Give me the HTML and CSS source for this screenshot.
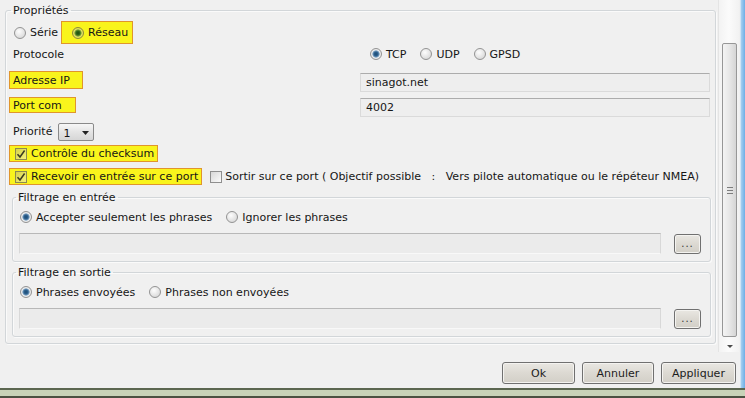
FILE: index.html
```html
<!DOCTYPE html>
<html>
<head>
  <meta charset="UTF-8"/>
  <title>Propriétés</title>
  <link rel="stylesheet" href="styles.css">
</head>
<body>
<div class="window">
  <div class="client">
    <div class="scrollarea">
      <div class="content">
        <fieldset class="group group-main">
          <legend>Propriétés</legend>

          <div class="row row-mode">
            <label class="opt"><span class="radio"></span>Série</label>
            <label class="opt mark mark-mode"><span class="radio on-mark"></span>Réseau</label>
          </div>

          <div class="row row-proto">
            <span class="col-label lbl">Protocole</span>
            <div class="col-field opts">
              <label class="opt"><span class="radio on"></span>TCP</label>
              <label class="opt"><span class="radio"></span>UDP</label>
              <label class="opt"><span class="radio"></span>GPSD</label>
            </div>
          </div>

          <div class="row row-ip">
            <div class="col-label"><span class="mark mark-ip">Adresse IP</span></div>
            <div class="col-field"><div class="field field-ip">sinagot.net</div></div>
          </div>

          <div class="row row-port">
            <div class="col-label"><span class="mark mark-port">Port com</span></div>
            <div class="col-field"><div class="field field-port">4002</div></div>
          </div>

          <div class="row row-prio">
            <span class="lbl">Priorité</span>
            <div class="combo">
              <span>1</span>
              <svg width="7" height="4" viewBox="0 0 7 4"><path d="M0 0H7L3.5 4Z" fill="#222"/></svg>
            </div>
          </div>

          <div class="row row-check">
            <label class="opt mark mark-check">
              <span class="check check-mark"><svg width="10" height="10" viewBox="0 0 10 10"><path d="M1.5 5.2L4 8L8.6 1.5" fill="none" stroke="#3a3a20" stroke-width="1.5"/></svg></span>Contrôle du checksum
            </label>
          </div>

          <div class="row row-recv">
            <label class="opt mark mark-check">
              <span class="check check-mark"><svg width="10" height="10" viewBox="0 0 10 10"><path d="M1.5 5.2L4 8L8.6 1.5" fill="none" stroke="#3a3a20" stroke-width="1.5"/></svg></span>Recevoir en entrée sur ce port
            </label>
            <label class="opt opt-out"><span class="check"></span><span class="pre">Sortir sur ce port ( Objectif possible   :   Vers pilote automatique ou le répéteur NMEA)</span></label>
          </div>

          <fieldset class="group group-sub group-in">
            <legend>Filtrage en entrée</legend>
            <div class="row row-filter">
              <label class="opt"><span class="radio on"></span>Accepter seulement les phrases</label>
              <label class="opt"><span class="radio"></span>Ignorer les phrases</label>
            </div>
            <div class="row row-list">
              <div class="field field-list"></div>
              <button class="browse">...</button>
            </div>
          </fieldset>

          <fieldset class="group group-sub group-out">
            <legend>Filtrage en sortie</legend>
            <div class="row row-filter">
              <label class="opt"><span class="radio on"></span>Phrases envoyées</label>
              <label class="opt"><span class="radio"></span>Phrases non envoyées</label>
            </div>
            <div class="row row-list">
              <div class="field field-list"></div>
              <button class="browse">...</button>
            </div>
          </fieldset>
        </fieldset>
      </div>

      <div class="vscroll">
        <div class="thumb"><span class="grip"></span></div>
        <span class="arrow-down"></span>
      </div>
    </div>

    <div class="buttonbar">
      <button class="btn btn-ok">Ok</button>
      <button class="btn btn-cancel">Annuler</button>
      <button class="btn btn-apply">Appliquer</button>
    </div>
  </div>
  <div class="frame-right"></div>
</div>
<div class="taskbar"></div>
</body>
</html>
```

FILE: styles.css
```css
html, body{
  margin: 0;
  padding: 0;
}
body{
  width: 745px;
  height: 398px;
  overflow: hidden;
  background-color: #f0f0f0;
  color: #161616;
  font-family: "DejaVu Sans", sans-serif;
  font-size: 11px;
  line-height: 13px;
  display: flex;
  flex-direction: column;
}

/* window frame */
.window{
  display: flex;
  height: 388px;
}
.client{
  width: 740px;
  display: flex;
  flex-direction: column;
}
.frame-right{
  width: 5px;
  background: linear-gradient(to right, #e9f1f8, #9fcbef 30%, #6eaee6);
}
.taskbar{
  height: 6px;
  border-top: 2px solid #5b6650;
  border-bottom: 2px solid #4b5242;
  background-color: #c8d3b8;
}

.scrollarea{
  height: 352px;
  display: flex;
}
.content{
  width: 711px;
  padding: 4px 2px 0 5px;
}

/* group boxes */
.group{
  margin: 0;
  border: 1px solid #d2d6d9;
  border-radius: 3px;
  box-shadow: inset 1px 1px 0 #fafafa, 1px 1px 0 #fafafa;
  min-width: 0;
}
.group legend{
  padding: 0 2px;
  line-height: 13px;
}
.group-main{
  padding: 0 4px 6px 3px;
}
.group-main > legend{
  margin-left: 2px;
}
.group-sub{
  padding: 0 9px 7px 6px;
  margin-left: 3px;
}
.group-sub > legend{
  margin-left: -3px;
}
.group-in{ margin-top: 6px; }
.group-out{ margin-top: 4px; }

/* rows */
.row{
  display: flex;
  align-items: center;
}
.row-mode{ margin-top: 4px; height: 23px; padding-left: 5px; }
.row-proto{ height: 20px; }
.row-ip{ margin-top: 7px; height: 21px; align-items: flex-start; }
.row-port{ margin-top: 5px; height: 20px; align-items: flex-start; }
.row-prio{ margin-top: 6px; height: 18px; align-items: flex-start; }
.row-check{ margin-top: 4px; height: 17px; }
.row-recv{ margin-top: 6px; height: 17px; }
.row-filter{ margin-top: 6px; height: 14px; padding-left: 1px; }
.row-list{ margin-top: 9px; height: 21px; }

.col-label{
  width: 351px;
  flex: none;
}
.col-field{
  flex: 1;
  margin-right: 1px;
}
.lbl{ padding-left: 4px; }
.row-prio .lbl{ padding-top: 2px; }

/* yellow highlighted labels */
.mark{
  background-color: #f9f41c;
  border: 1px solid #e0952c;
  box-sizing: border-box;
  display: inline-flex;
  align-items: center;
}
.mark-mode{
  height: 23px;
  margin-left: 3px;
  padding: 0 4px 0 10px;
}
.mark-ip{
  width: 74px;
  height: 18px;
  padding-left: 3px;
}
.mark-port{
  width: 67px;
  height: 16px;
  padding-left: 3px;
}
.mark-check{
  height: 17px;
  padding: 0 3px 0 5px;
}

/* radios & checks */
.opt{
  display: inline-flex;
  align-items: center;
  white-space: nowrap;
}
.radio{
  width: 12px;
  height: 12px;
  flex: none;
  box-sizing: border-box;
  border-radius: 50%;
  border: 1px solid #939393;
  background: radial-gradient(circle at 40% 35%, #fdfdfd, #e4e4e4 55%, #d0d0d0);
  margin-right: 4px;
}
.radio.on{
  background: radial-gradient(circle, #1d4a72 0, #2d618f 2px, #7fa3c3 3.3px, #f2f2f2 4px, #d8d8d8 6px);
}
.radio.on-mark{
  border-color: #8c8a40;
  background: radial-gradient(circle, #1d4a10 0, #2f6a1a 2px, #86a640 3.3px, #e9e66a 4px, #d3cf3a 6px);
}
.check{
  width: 12px;
  height: 12px;
  flex: none;
  box-sizing: border-box;
  border: 1px solid #8f8f8f;
  background: linear-gradient(135deg, #d8d8d8, #fbfbfb);
  margin-right: 4px;
  display: flex;
  align-items: center;
  justify-content: center;
}
.check-mark{
  border-color: #8c8a50;
  background: linear-gradient(135deg, #d6d24a, #f5f17e);
}
.opt-out{
  margin-left: 8px;
}
.opt-out .check{ margin-right: 3px; }
.pre{ white-space: pre; }

.opts{
  padding-left: 6px;
  display: flex;
  gap: 14px;
}
.row-filter .opt + .opt{ margin-left: 14px; }

/* fields */
.field{
  box-sizing: border-box;
  height: 19px;
  background-color: #eeeeee;
  border: 1px solid #dadada;
  border-top-color: #acacac;
  padding-left: 5px;
  line-height: 17px;
}
.field-ip{ margin-top: 2px; }
.field-port{ margin-top: 1px; }
.field-list{
  flex: 1;
  height: 21px;
  background-color: #ebebeb;
  border-color: #d8d8d8;
  border-top-color: #b8b8b8;
  border-bottom-color: #f8f8f8;
}

.combo{
  margin-left: 6px;
  width: 36px;
  height: 18px;
  box-sizing: border-box;
  border: 1px solid #8a8a8a;
  border-radius: 2px;
  background: linear-gradient(#f7f7f7, #e4e4e4 50%, #d6d6d6);
  display: flex;
  align-items: center;
  justify-content: space-between;
  padding: 2px 4px 0 4px;
}

/* buttons */
button{
  font-family: "DejaVu Sans", sans-serif;
  font-size: 11px;
  color: #1c1c1c;
  cursor: pointer;
}
.btn, .browse{
  box-sizing: border-box;
  border: 1px solid #707070;
  border-radius: 3px;
  background: linear-gradient(#e9e7e2, #dcd9d2 50%, #d2cfc7);
  box-shadow: inset 0 0 0 1px #f4f3f0;
  padding: 0;
}
.browse{
  width: 27px;
  height: 20px;
  margin-left: 13px;
  font-size: 10px;
  line-height: 10px;
  color: #333;
  letter-spacing: 1px;
}
.buttonbar{
  flex: 1;
  display: flex;
  justify-content: flex-end;
  align-items: flex-start;
  gap: 7px;
  padding: 10px 4px 0 0;
}
.btn{ height: 22px; }
.btn-ok{ width: 73px; }
.btn-cancel{ width: 72px; }
.btn-apply{ width: 75px; }

/* scrollbar */
.vscroll{
  width: 21px;
  border-left: 1px solid #e4e4e4;
  background: linear-gradient(to right, #f3f3f3, #fbfbfb 50%, #f2f2f2);
  display: flex;
  flex-direction: column;
  align-items: flex-start;
  padding-top: 43px;
  box-sizing: border-box;
}
.thumb{
  margin-left: 3px;
  width: 15px;
  height: 294px;
  box-sizing: border-box;
  border: 1px solid #979797;
  border-radius: 2px;
  background: linear-gradient(to right, #f4f4f4, #e7e7e7 50%, #d5d5d5);
  display: flex;
  align-items: center;
  justify-content: center;
}
.grip{
  width: 6px;
  height: 7px;
  background: repeating-linear-gradient(#7d7d7d 0 1px, transparent 1px 3px);
}
.arrow-down{
  margin: 8px 0 0 8px;
  width: 0;
  height: 0;
  border-left: 3.5px solid transparent;
  border-right: 3.5px solid transparent;
  border-top: 3px solid #4a4a4a;
}
```
